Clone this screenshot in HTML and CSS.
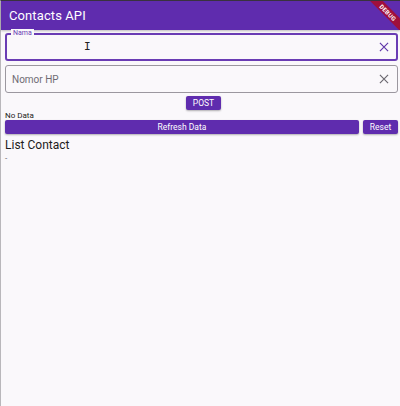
FILE: index.html
```html
<!DOCTYPE html>
<html>
<head>
<meta charset="utf-8">
<link rel="stylesheet" href="styles.css">
</head>
<body>
<div class="app">
  <header class="appbar">
    <span class="title">Contacts API</span>
    <div class="debug">DEBUG</div>
  </header>
  <main class="content">
    <div class="field focused">
      <span class="label">Nama</span>
      <span class="cursor">I</span>
      <svg class="clear" viewBox="0 0 24 24" width="14" height="14"><path d="M5 5L19 19M19 5L5 19" stroke="currentColor" stroke-width="2" fill="none"/></svg>
    </div>
    <div class="field">
      <span class="placeholder">Nomor HP</span>
      <svg class="clear" viewBox="0 0 24 24" width="14" height="14"><path d="M5 5L19 19M19 5L5 19" stroke="currentColor" stroke-width="2" fill="none"/></svg>
    </div>
    <div class="post-row"><button class="btn post">POST</button></div>
    <div class="nodata">No Data</div>
    <div class="btn-row">
      <button class="btn refresh">Refresh Data</button>
      <button class="btn reset">Reset</button>
    </div>
    <h2 class="heading">List Contact</h2>
    <div class="dash">-</div>
  </main>
</div>
</body>
</html>
```
FILE: styles.css
```css
* { box-sizing: border-box; }
html, body { margin: 0; padding: 0; }
body {
  width: 400px;
  height: 406px;
  overflow: hidden;
  background: #fbf8fc;
  font-family: Roboto, "Liberation Sans", sans-serif;
}
.app {
  height: 406px;
  border-left: 1px solid #b9b7bb;
  border-top: 1px solid #3a3340;
  background: #faf8fb;
}
.appbar {
  position: relative;
  height: 29px;
  background: #5f2cae;
  display: flex;
  align-items: center;
  padding-left: 8px;
  overflow: hidden;
  box-shadow: 0 1px 2px rgba(0,0,0,0.25);
}
.title {
  color: #fff;
  font-size: 13px;
  letter-spacing: 0.1px;
}
.debug {
  position: absolute;
  top: 7px;
  right: -17px;
  width: 58px;
  height: 9px;
  background: #a0103c;
  color: #fff;
  font-size: 6px;
  font-weight: bold;
  text-align: center;
  line-height: 9px;
  transform: rotate(45deg);
  letter-spacing: 0.3px;
}
.content {
  padding: 3px 2px 0 4px;
  display: flex;
  flex-direction: column;
}
.field {
  position: relative;
  height: 28px;
  border: 1px solid #9b979f;
  border-radius: 3px;
  display: flex;
  align-items: center;
  padding: 0 6px;
  margin-bottom: 4px;
}
.field.focused {
  border: 2px solid #6a3cb4;
  padding: 0 5px;
}
.label {
  position: absolute;
  top: -6px;
  left: 4px;
  padding: 0 2px;
  background: #faf8fb;
  color: #6a3cb4;
  font-size: 7px;
  line-height: 9px;
}
.cursor {
  position: absolute;
  left: 77px;
  top: 5px;
  font-size: 11px;
  color: #222;
  font-family: "DejaVu Sans Mono", monospace;
}
.placeholder {
  color: #6f6b73;
  font-size: 10px;
}
.clear {
  margin-left: auto;
  color: #6b6870;
}
.focused .clear { color: #5f35a8; }
.post-row {
  display: flex;
  justify-content: center;
  margin-top: -1px;
}
.btn {
  border: none;
  background: #5f2cae;
  color: #fff;
  font-family: Roboto, "Liberation Sans", sans-serif;
  font-size: 8.5px;
  border-radius: 2px;
  height: 14px;
  padding: 0;
  box-shadow: 0 1px 2px rgba(0,0,0,0.3);
}
.post { width: 35px; margin-left: 4px; }
.nodata {
  font-size: 8px;
  color: #1d1b20;
  line-height: 9px;
  margin-top: 1px;
}
.btn-row {
  display: flex;
  gap: 4px;
}
.refresh { flex: 1; }
.reset { width: 35px; }
.heading {
  margin: 4px 0 0 0;
  font-size: 12px;
  font-weight: 400;
  color: #1d1b20;
  line-height: 14px;
}
.dash {
  font-size: 8px;
  color: #555;
  line-height: 10px;
  margin-top: 2px;
}
```
